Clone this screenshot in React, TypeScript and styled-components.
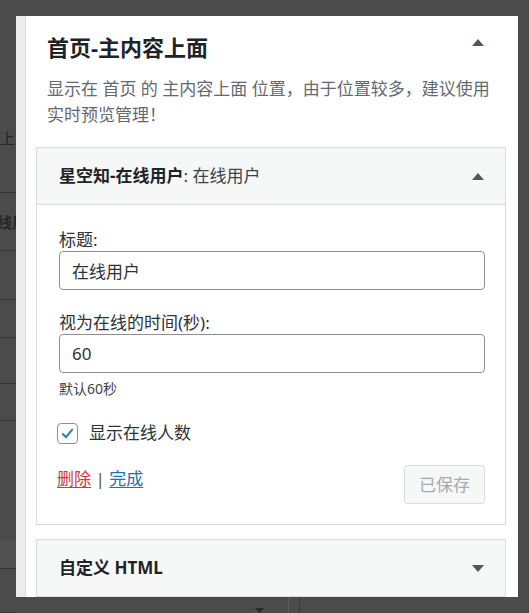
import React from "react";
import styled, { createGlobalStyle } from "styled-components";

const GlobalStyle = createGlobalStyle`
  html, body { margin: 0; padding: 0; background: #4b4b4b; }
  body {
    width: 529px;
    height: 613px;
    overflow: hidden;
    font-family: "Noto Sans", "Noto Sans CJK SC", sans-serif;
    color: #1d2327;
  }
  * { box-sizing: border-box; }
`;

const Page = styled.div`
  display: flex;
  width: 529px;
  height: 613px;
  background: #4b4b4b;
  overflow: hidden;
`;

/* ---------- dimmed page behind the panel ---------- */
const Backdrop = styled.div`
  width: 16px;
  flex: none;
  display: flex;
  flex-direction: column;
  overflow: hidden;
`;

const BackdropRow = styled.div<{ $h: number; $pad?: number; $shade?: string }>`
  height: ${(p) => p.$h}px;
  flex: none;
  padding-top: ${(p) => p.$pad ?? 0}px;
  border-bottom: 1px solid #363636;
  background: ${(p) => p.$shade ?? "transparent"};
  white-space: nowrap;
  overflow: hidden;
`;

const BackdropText = styled.span<{ $bold?: boolean; $shift?: number }>`
  display: block;
  margin-left: ${(p) => p.$shift ?? 0}px;
  font-size: 15px;
  line-height: 24px;
  font-weight: ${(p) => (p.$bold ? 700 : 400)};
  color: #262626;
`;

const MainColumn = styled.div`
  width: 502px;
  flex: none;
  display: flex;
  flex-direction: column;
`;

const TopGap = styled.div`
  height: 16px;
  flex: none;
`;

const BottomStrip = styled.div`
  height: 16px;
  flex: none;
  display: flex;
  align-items: flex-end;
  padding-left: 239px;
`;

const BackdropCaret = styled.svg`
  width: 9px;
  height: 5px;
  display: block;
  fill: #2a2a2a;
`;

const BackdropDivider = styled.div<{ $gap: number; $tone: string }>`
  width: 1px;
  height: 16px;
  margin-left: ${(p) => p.$gap}px;
  background: ${(p) => p.$tone};
`;

const RightGap = styled.div`
  flex: 1;
`;

/* ---------- customizer panel ---------- */
const Panel = styled.div`
  height: 581px;
  flex: none;
  display: flex;
  background: #fff;
  overflow: hidden;
`;

const PanelEdge = styled.div`
  width: 10px;
  flex: none;
  background: #ececec;
  border-right: 1px solid #dcdcde;
`;

const PanelBody = styled.div`
  flex: 1;
  min-width: 0;
  display: flex;
  flex-direction: column;
  padding: 18px 12px 0 10px;
`;

const SectionHead = styled.div`
  display: flex;
  align-items: flex-start;
  justify-content: space-between;
  padding: 0 22px 0 11px;
`;

const SectionTitle = styled.h3`
  margin: 0;
  font-size: 22px;
  line-height: 26px;
  font-weight: 700;
  color: #1d2327;
`;

const Caret = styled.svg<{ $top?: number }>`
  width: 12px;
  height: 7px;
  flex: none;
  display: block;
  margin-top: ${(p) => p.$top ?? 0}px;
  fill: #50575e;
`;

const SectionDesc = styled.p`
  margin: 16px 0 0;
  padding: 0 10px 0 11px;
  font-size: 17px;
  line-height: 26px;
  color: #646970;
`;

const Widget = styled.div<{ $gap: number }>`
  margin-top: ${(p) => p.$gap}px;
  border: 1px solid #dcdcde;
  background: #fff;
  flex: none;
`;

const WidgetHeader = styled.div<{ $open?: boolean }>`
  height: ${(p) => (p.$open ? 57 : 56)}px;
  display: flex;
  align-items: center;
  justify-content: space-between;
  padding: 0 21px 0 22px;
  background: #f6f7f7;
  border-bottom: ${(p) => (p.$open ? "1px solid #dcdcde" : "none")};
`;

const WidgetTitle = styled.h4`
  margin: 0;
  font-size: 17px;
  line-height: 24px;
  font-weight: 700;
  color: #1d2327;
  white-space: nowrap;
`;

const InTitle = styled.span`
  font-weight: 400;
  color: #3c434a;
`;

const WidgetBody = styled.div`
  padding: 24px 20px 20px 22px;
  display: flex;
  flex-direction: column;
`;

const Field = styled.div<{ $gap?: number }>`
  display: flex;
  flex-direction: column;
  margin-top: ${(p) => p.$gap ?? 0}px;
`;

const FieldLabel = styled.label`
  font-size: 17px;
  line-height: 22px;
  color: #2c3338;
`;

const TextInput = styled.input`
  height: 39px;
  width: 100%;
  margin: 0;
  padding: 0 12px;
  border: 1px solid #8c8f94;
  border-radius: 4px;
  background: #fff;
  font-family: inherit;
  font-size: 17px;
  color: #2c3338;
  outline: none;
`;

const Hint = styled.small`
  display: block;
  margin-top: 6px;
  font-size: 14px;
  line-height: 20px;
  color: #3c434a;
`;

const CheckRow = styled.label`
  display: flex;
  align-items: center;
  gap: 11px;
  margin-top: 22px;
  margin-left: -2px;
  font-size: 17px;
  line-height: 24px;
  color: #2c3338;
`;

const CheckBox = styled.span`
  width: 21px;
  height: 21px;
  flex: none;
  display: flex;
  align-items: center;
  justify-content: center;
  border: 1px solid #8c8f94;
  border-radius: 4px;
  background: #fff;
`;

const CheckMark = styled.svg`
  width: 17px;
  height: 17px;
  display: block;
  fill: none;
  stroke: #3582c4;
  stroke-width: 2.6;
  stroke-linecap: round;
  stroke-linejoin: round;
`;

const Actions = styled.div`
  display: flex;
  align-items: flex-start;
  justify-content: space-between;
  margin-top: 20px;
`;

const LinkGroup = styled.div`
  font-size: 17px;
  line-height: 28px;
  color: #50575e;
  margin-left: -2px;
`;

const ActionLink = styled.a<{ $danger?: boolean }>`
  color: ${(p) => (p.$danger ? "#d63638" : "#2271b1")};
  text-decoration: underline;
  text-underline-offset: 2px;
  cursor: pointer;
`;

const SavedButton = styled.button`
  height: 39px;
  padding: 0 14px;
  border: 1px solid #dcdcde;
  border-radius: 3px;
  background: #f6f7f7;
  color: #a7aaad;
  font-family: inherit;
  font-size: 17px;
  line-height: 1;
`;

const Up = ({ top }: { top?: number }) => (
  <Caret viewBox="0 0 12 7" $top={top}>
    <polygon points="6,0 12,7 0,7" />
  </Caret>
);

const Down = () => (
  <Caret viewBox="0 0 12 7">
    <polygon points="0,0 12,0 6,7" />
  </Caret>
);

export default function App() {
  return (
    <>
      <GlobalStyle />
      <Page>
        <Backdrop>
          <BackdropRow $h={193} $pad={126}>
            <BackdropText>上面</BackdropText>
          </BackdropRow>
          <BackdropRow $h={58} $pad={17}>
            <BackdropText $bold $shift={-3}>线用</BackdropText>
          </BackdropRow>
          <BackdropRow $h={49} />
          <BackdropRow $h={38} />
          <BackdropRow $h={46} />
          <BackdropRow $h={37} />
          <BackdropRow $h={148} $shade="linear-gradient(#4b4b4b 0, #4b4b4b 119px, #515151 119px)" />
          <BackdropRow $h={44} />
        </Backdrop>

        <MainColumn>
          <TopGap />
          <Panel>
            <PanelEdge />
            <PanelBody>
              <SectionHead>
                <SectionTitle>首页-主内容上面</SectionTitle>
                <Up top={5} />
              </SectionHead>
              <SectionDesc>
                显示在 首页 的 主内容上面 位置，由于位置较多，建议使用实时预览管理！
              </SectionDesc>

              <Widget $gap={19}>
                <WidgetHeader $open>
                  <WidgetTitle>
                    星空知-在线用户<InTitle>: 在线用户</InTitle>
                  </WidgetTitle>
                  <Up />
                </WidgetHeader>
                <WidgetBody>
                  <Field>
                    <FieldLabel htmlFor="w-title">标题:</FieldLabel>
                    <TextInput id="w-title" defaultValue="在线用户" />
                  </Field>
                  <Field $gap={22}>
                    <FieldLabel htmlFor="w-time">视为在线的时间(秒):</FieldLabel>
                    <TextInput id="w-time" defaultValue="60" />
                    <Hint>默认60秒</Hint>
                  </Field>
                  <CheckRow>
                    <CheckBox>
                      <CheckMark viewBox="0 0 20 20">
                        <path d="M4.5 10.5 L8.3 14.3 L15.5 5.5" />
                      </CheckMark>
                    </CheckBox>
                    显示在线人数
                  </CheckRow>
                  <Actions>
                    <LinkGroup>
                      <ActionLink $danger>删除</ActionLink> | <ActionLink>完成</ActionLink>
                    </LinkGroup>
                    <SavedButton disabled>已保存</SavedButton>
                  </Actions>
                </WidgetBody>
              </Widget>

              <Widget $gap={14}>
                <WidgetHeader>
                  <WidgetTitle>自定义 HTML</WidgetTitle>
                  <Down />
                </WidgetHeader>
              </Widget>
            </PanelBody>
          </Panel>
          <BottomStrip>
            <BackdropCaret viewBox="0 0 9 5">
              <polygon points="0,0 9,0 4.5,5" />
            </BackdropCaret>
            <BackdropDivider $gap={24} $tone="#5a5a5a" />
            <BackdropDivider $gap={10} $tone="#3a3a3a" />
          </BottomStrip>
        </MainColumn>
        <RightGap />
      </Page>
    </>
  );
}
